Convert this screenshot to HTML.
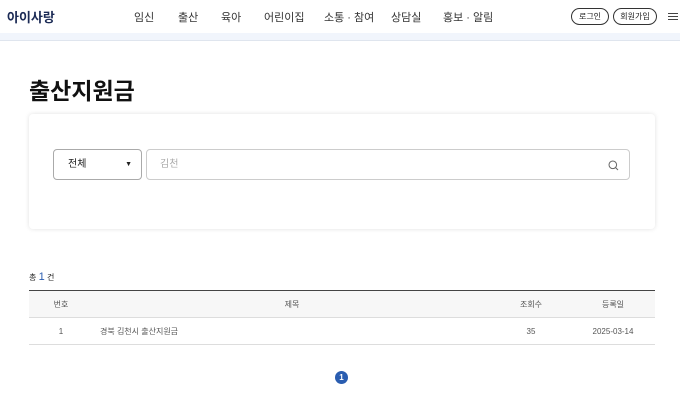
<!DOCTYPE html><html><head><meta charset="utf-8"><style>
*{margin:0;padding:0;box-sizing:border-box}
body{width:680px;height:400px;overflow:hidden;background:#fff;font-family:"Liberation Sans","Noto Sans CJK KR",sans-serif;color:#222;position:relative}
.a{position:absolute}
.nav span{position:absolute;top:9px;font-size:11px;color:#333}
.btn{position:absolute;top:8px;height:17px;border:1px solid #333;border-radius:9px;font-size:8px;line-height:15px;text-align:center}
td,th{font-size:8px;color:#555;font-weight:normal}
.hl{position:absolute;left:668px;width:10px;height:1px;background:#444}
</style></head><body>
<div class="a" style="left:7px;top:7px;font-size:13px;font-weight:bold;color:#1b2a55">아이사랑</div>
<div class="nav"><span style="left:134px">임신</span><span style="left:178px">출산</span><span style="left:221px">육아</span><span style="left:264px">어린이집</span><span style="left:324px">소통 · 참여</span><span style="left:391px">상담실</span><span style="left:443px">홍보 · 알림</span></div>
<div class="btn" style="left:571px;width:38px">로그인</div>
<div class="btn" style="left:613px;width:44px">회원가입</div>
<div class="hl" style="top:13px"></div><div class="hl" style="top:16px"></div><div class="hl" style="top:19px"></div>
<div class="a" style="left:0;top:33px;width:680px;height:8px;background:#f1f5fc;border-bottom:1px solid #dfe5ee"></div>
<div class="a" style="left:29px;top:72px;font-size:23px;font-weight:bold;color:#111">출산지원금</div>
<div class="a" style="left:29px;top:114px;width:626px;height:115px;border-radius:4px;box-shadow:0 0 5px rgba(0,0,0,.12)"></div>
<div class="a" style="left:53px;top:149px;width:89px;height:31px;border:1px solid #aaa;border-radius:4px;font-size:10px;line-height:29px;padding-left:14px">전체<span style="position:absolute;right:9px;top:0;font-size:7px">▼</span></div>
<div class="a" style="left:146px;top:149px;width:484px;height:31px;border:1px solid #ccc;border-radius:4px;font-size:10px;line-height:29px;padding-left:13px;color:#aaa">김천
<svg style="position:absolute;right:10px;top:10px" width="11" height="11" viewBox="0 0 11 11"><circle cx="4.8" cy="4.8" r="3.8" fill="none" stroke="#666" stroke-width="1"/><path d="M7.6 7.6L10 10" stroke="#666" stroke-width="1"/></svg></div>
<div class="a" style="left:29px;top:271px;font-size:8px">총 <span style="font-size:11px;color:#2a5db0">1</span> 건</div>
<table class="a" style="left:29px;top:290px;width:626px;border-collapse:collapse;border-top:1px solid #444">
<tr style="background:#f7f7f7;height:27px"><td style="width:64px;text-align:center">번호</td><td style="text-align:center">제목</td><td style="width:80px;text-align:center">조회수</td><td style="width:84px;text-align:center">등록일</td></tr>
<tr style="height:27px;border-top:1px solid #ddd;border-bottom:1px solid #ddd"><td style="text-align:center">1</td><td style="padding-left:7px">경북 김천시 출산지원금</td><td style="text-align:center">35</td><td style="text-align:center">2025-03-14</td></tr>
</table>
<div class="a" style="left:335px;top:371px;width:13px;height:13px;border-radius:50%;background:#2a5db0;color:#fff;font-size:8px;font-weight:bold;text-align:center;line-height:13px">1</div>
</body></html>
